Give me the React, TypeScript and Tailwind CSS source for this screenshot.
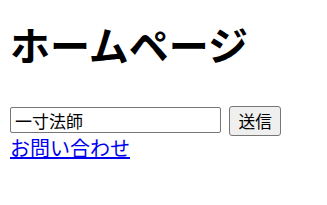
export default function App() {
  return (
    <div className="min-h-screen bg-white p-[10px] text-black font-['Noto_Sans_CJK_JP','Noto_Sans',sans-serif]">
      <h1 className="mt-[14px] mb-[42px] text-[40px] font-bold leading-[40px]">ホームページ</h1>

      <form className="flex items-start gap-[8px]" onSubmit={e => e.preventDefault()}>
        <input
          type="text"
          defaultValue="一寸法師"
          className="mt-[1px] h-[26px] w-[211px] rounded-[2px] border border-[#767676] px-[4px] text-[17px] leading-[22px] outline-none"
        />
        <button
          type="submit"
          className="h-[30px] rounded-[3px] border border-[#767676] bg-[#efefef] px-[8.5px] text-[16.67px] leading-[22px]"
        >
          送信
        </button>
      </form>

      <a href="#" className="mt-[1px] block w-fit text-[20px] leading-[22px] text-[#0000ee] underline">
        お問い合わせ
      </a>
    </div>
  )
}
